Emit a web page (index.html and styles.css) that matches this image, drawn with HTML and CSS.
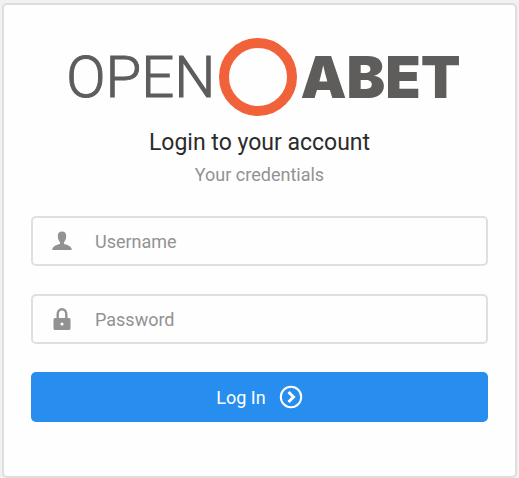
FILE: index.html
```
<!DOCTYPE html>
<html lang="en">
<head>
<meta charset="utf-8">
<meta name="viewport" content="width=device-width, initial-scale=1">
<title>OpenAbet</title>
<link rel="stylesheet" href="styles.css">
</head>
<body>
<main class="card">
  <div class="logo">
    <span class="logo-open">OPEN</span>
    <span class="logo-ring"></span>
    <span class="logo-abet">ABET</span>
  </div>
  <h1 class="title">Login to your account</h1>
  <p class="subtitle">Your credentials</p>
  <form class="form">
    <div class="field">
      <label class="field-icon" for="username" aria-label="Username">
        <svg width="20" height="20" viewBox="0 0 20 20"><path d="M10 0.500C12.800 0.500 14.200 2.200 14.200 5C14.200 8 13.200 9.800 12 11.200V12.800C14 14 19.500 14.200 19.800 19H0.200C0.500 14.200 6 14 8 12.800V11.200C6.800 9.800 5.800 8 5.800 5C5.800 2.200 7.200 0.500 10 0.500Z"/></svg>
      </label>
      <input class="field-input" id="username" type="text" placeholder="Username">
    </div>
    <div class="field">
      <label class="field-icon" for="password" aria-label="Password">
        <svg width="20" height="24" viewBox="0 0 20 24"><path fill-rule="evenodd" d="M4.500 11V7a5.500 6 0 0 1 11 0v4h1.500q1.500 0 1.500 1.500v9q0 1.500-1.500 1.500H3q-1.500 0-1.500-1.500v-9Q1.500 11 3 11ZM6.900 11h6.200V7a3.100 3.600 0 0 0-6.200 0ZM10 15.400a1.600 1.600 0 1 0 0 3.200a1.600 1.600 0 1 0 0-3.200Z"/></svg>
      </label>
      <input class="field-input" id="password" type="password" placeholder="Password">
    </div>
    <button class="submit" type="submit">
      <span>Log In</span>
      <svg width="24" height="24" viewBox="0 0 24 24" fill="none" stroke="currentColor"><circle cx="12" cy="12" r="10.200" stroke-width="2"/><path d="M9.500 7L14.500 12L9.500 17" stroke-width="3"/></svg>
    </button>
  </form>
</main>
</body>
</html>
```
FILE: styles.css
```
* {
  box-sizing: border-box;
}

body {
  margin: 0;
  padding: 3px 2px 0;
  background: #f1f1f1;
  font-family: Roboto, "Liberation Sans", sans-serif;
}

.card {
  padding: 32px 27px 54px;
  border: 2px solid #dedede;
  border-radius: 5px;
  background: #fefefe;
  text-align: center;
}

.logo {
  display: flex;
  align-items: center;
  justify-content: center;
  padding-left: 8px;
  color: #5e5d5c;
  font-size: 58px;
  line-height: 80px;
}

.logo-open {
  font-weight: 300;
  -webkit-text-stroke: 1px currentColor;
}

.logo-ring {
  width: 78px;
  height: 78px;
  margin: 0 3px 0 4px;
  border: 10px solid #f1623a;
  border-radius: 50%;
}

.logo-abet {
  font-family: Inter, "Liberation Sans", sans-serif;
  font-kerning: none;
  font-weight: 900;
}

.title {
  margin: 9px 0 0;
  color: #2b2b2b;
  font-size: 23px;
  font-weight: 400;
  line-height: 34px;
}

.subtitle {
  margin: 0;
  color: #929292;
  font-size: 18px;
  line-height: 30px;
}

.form {
  display: grid;
  gap: 28px;
  margin-top: 26px;
}

.field {
  display: flex;
  align-items: center;
  height: 50px;
  border: 2px solid #dfdfdf;
  border-radius: 5px;
}

.field-icon {
  display: flex;
  justify-content: center;
  width: 58px;
  fill: #929292;
}

.field-input {
  flex: 1;
  min-width: 0;
  height: 100%;
  padding: 0 16px 0 4px;
  border: 0;
  outline: 0;
  background: transparent;
  color: #2b2b2b;
  font: inherit;
  font-size: 18px;
}

.field-input::placeholder {
  color: #929292;
}

.submit {
  display: flex;
  align-items: center;
  justify-content: center;
  gap: 13px;
  height: 50px;
  border: 0;
  border-radius: 5px;
  background: #278eef;
  color: #fff;
  font: inherit;
  font-size: 18px;
}
```
